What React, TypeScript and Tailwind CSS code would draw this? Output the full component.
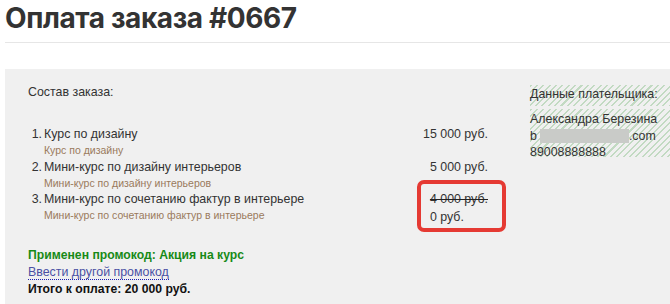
import React from "react";

const items = [
  { n: "1.", title: "Курс по дизайну", sub: "Курс по дизайну", price: "15 000 руб." },
  { n: "2.", title: "Мини-курс по дизайну интерьеров", sub: "Мини-курс по дизайну интерьеров", price: "5 000 руб." },
];

const hatch =
  "bg-[repeating-linear-gradient(135deg,#c2dac2_0px,#c2dac2_1.5px,transparent_1.5px,transparent_4.5px)]";

export default function App() {
  return (
    <div className="w-[670px] h-[304px] overflow-hidden bg-white font-['Liberation_Sans',Arial,sans-serif] text-[#333]">
      <div className="pl-[5px]">
        <h1 className="h-[43px] pt-[0px] text-[28px] leading-[36px] font-bold text-[#333] font-['Inter',sans-serif] tracking-[-0.4px] border-b border-[#e6e6e6]">
          Оплата заказа #0667
        </h1>
        <div className="mt-[26px] h-[240px] bg-[#f0f0f0] flex pl-[23px] pt-[15px]">
          <div className="w-[460px] flex flex-col">
            <div className="text-[12.4px] leading-[16px]">Состав заказа:</div>
            <div className="mt-[26px] flex flex-col">
              {items.map((it) => (
                <div key={it.n} className="flex h-[32.5px]">
                  <div className="flex-1 flex">
                    <div className="w-[15px] text-right text-[12.4px] leading-[16px] pr-[1px]">{it.n}</div>
                    <div className="flex flex-col pl-[1px]">
                      <div className="text-[12.4px] leading-[16px]">{it.title}</div>
                      <div className="text-[10.5px] leading-[16px] text-[#9a7a5c]">{it.sub}</div>
                    </div>
                  </div>
                  <div className="text-[12.4px] leading-[16px] text-right">{it.price}</div>
                </div>
              ))}
              <div className="flex h-[32px]">
                <div className="flex-1 flex">
                  <div className="w-[15px] text-right text-[12.4px] leading-[16px] pr-[1px]">3.</div>
                  <div className="flex flex-col pl-[1px]">
                    <div className="text-[12.4px] leading-[16px]">Мини-курс по сочетанию фактур в интерьере</div>
                    <div className="text-[10.5px] leading-[16px] text-[#9a7a5c]">Мини-курс по сочетанию фактур в интерьере</div>
                  </div>
                </div>
                <div className="relative">
                  <div className="text-[12.4px] leading-[17px] line-through decoration-[#222]">4 000 руб.</div>
                  <div className="text-[12.4px] leading-[18px]">0 руб.</div>
                  <div className="absolute left-[-13px] top-[-11px] w-[89px] h-[52px] border-[4px] border-[#e53a33] rounded-[7px]" />
                </div>
              </div>
            </div>
            <div className="mt-[24px] flex flex-col text-[12.4px] leading-[17px]">
              <div className="font-bold text-[12.2px] text-[#178a17]">Применен промокод: Акция на курс</div>
              <div>
                <span className="text-[#4a50a4] border-b border-dotted border-[#1a20b0]">Ввести другой промокод</span>
              </div>
              <div className="font-bold text-[12.2px] text-[#111]">Итого к оплате: 20 000 руб.</div>
            </div>
          </div>
          <div className="ml-[42px] flex-1 flex flex-col">
            <div className={`${hatch} mt-[1px] h-[21px] text-[12.4px] leading-[16px] pt-[1px]`}>Данные плательщика:</div>
            <div className={`${hatch} mt-[3px] h-[48px] text-[12.4px] leading-[16.5px] pt-[2px]`}>
              <div>Александра Березина</div>
              <div className="flex items-center">
                <span>b</span>
                <span className="inline-block ml-[3px] w-[89px] h-[14px] bg-[#c9cbc8]" />
                <span>.com</span>
              </div>
              <div>89008888888</div>
            </div>
          </div>
        </div>
      </div>
    </div>
  );
}
